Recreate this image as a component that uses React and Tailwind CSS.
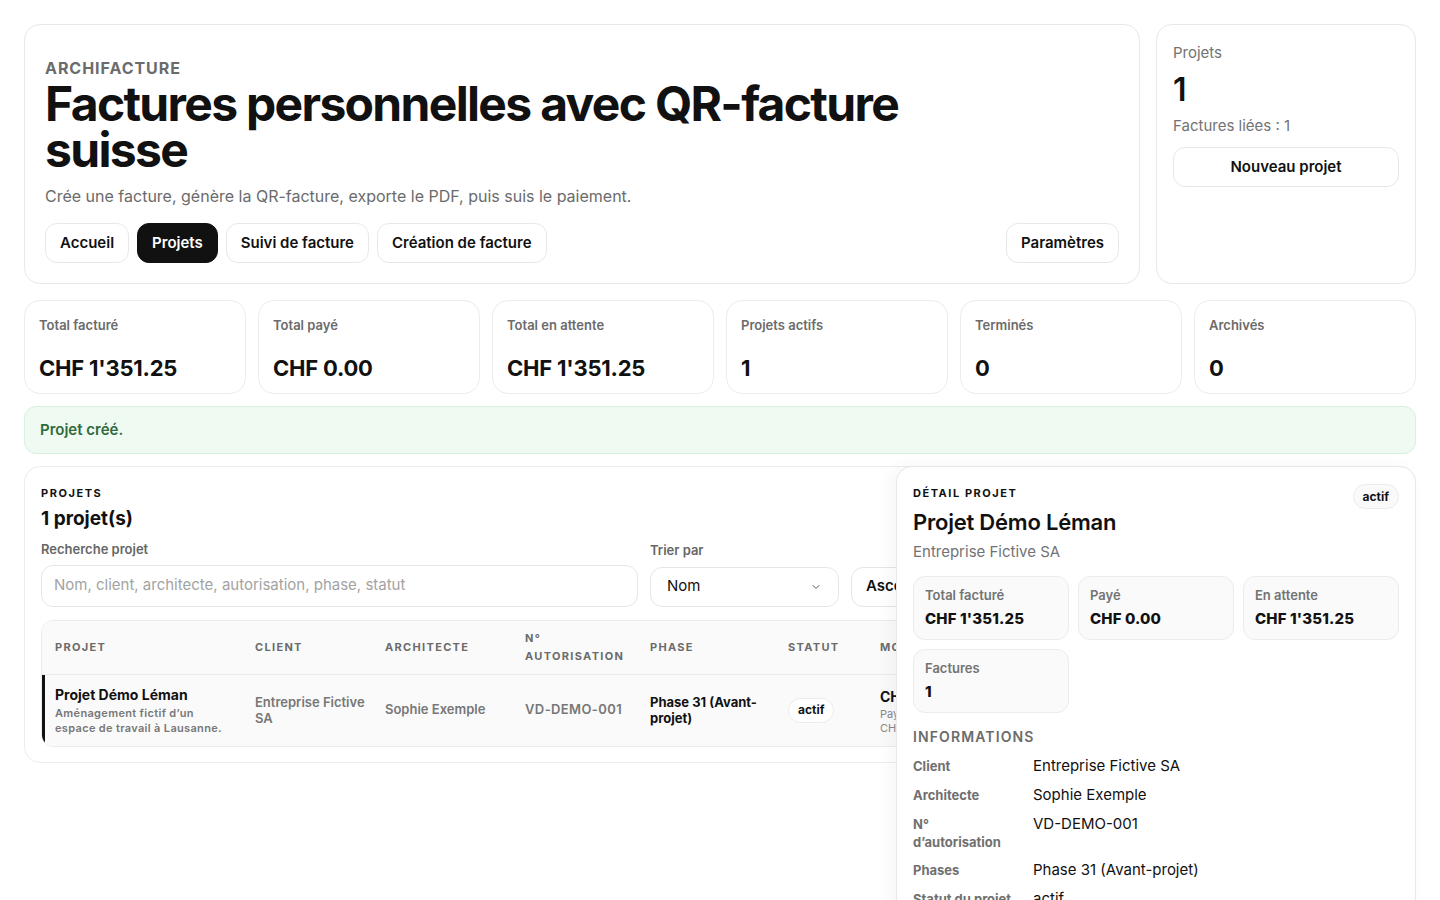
import React from 'react';
import { ChevronDown } from 'lucide-react';

const stats = [
  { label: 'Total facturé', value: "CHF 1'351.25" },
  { label: 'Total payé', value: 'CHF 0.00' },
  { label: 'Total en attente', value: "CHF 1'351.25" },
  { label: 'Projets actifs', value: '1' },
  { label: 'Terminés', value: '0' },
  { label: 'Archivés', value: '0' },
];

const navItems = ['Accueil', 'Projets', 'Suivi de facture', 'Création de facture'];

const infoRows = [
  { label: ['Client'], value: 'Entreprise Fictive SA' },
  { label: ['Architecte'], value: 'Sophie Exemple' },
  { label: ['N°', 'd’autorisation'], value: 'VD-DEMO-001' },
  { label: ['Phases'], value: 'Phase 31 (Avant-projet)' },
  { label: ['Statut du projet'], value: 'actif' },
];

const MiniStat = ({ label, value }) => (
  <div className="h-[64px] rounded-xl border border-[#ececec] bg-[#fafafa] px-[11px] pt-[9px]">
    <div className="text-[13px] font-semibold leading-[18px] text-[#737373]">{label}</div>
    <div className="mt-[4px] text-[15px] font-extrabold leading-[22px] tracking-[0.01em] text-[#111]">{value}</div>
  </div>
);

const App = () => {
  return (
    <div className="h-[900px] overflow-hidden bg-white font-['Inter',sans-serif] text-[#111]">
      <div className="flex flex-col gap-3 p-6">
        {/* Top row */}
        <div className="flex gap-4">
          <div className="flex h-[260px] flex-1 flex-col rounded-2xl border border-[#e8e8e8] px-5 pt-[31px] pb-5">
            <div className="text-[16px] font-bold uppercase tracking-[0.06em] text-[#6b6b6b]">Archifacture</div>
            <h1 className="mt-[1px] max-w-[880px] text-[48px] font-bold leading-[46px] tracking-[-0.035em] text-[#111]">
              Factures personnelles avec QR-facture suisse
            </h1>
            <p className="mt-[11px] text-[16px] text-[#6b6b6b]">
              Crée une facture, génère la QR-facture, exporte le PDF, puis suis le paiement.
            </p>
            <div className="mt-auto flex items-center gap-2">
              {navItems.map((item) => (
                <button
                  key={item}
                  className={`h-10 rounded-xl border px-[14px] text-[15px] font-semibold ${
                    item === 'Projets'
                      ? 'border-[#111] bg-[#111] text-white'
                      : 'border-[#e8e8e8] bg-white text-[#111]'
                  }`}
                >
                  {item}
                </button>
              ))}
              <button className="ml-auto h-10 rounded-xl border border-[#e8e8e8] bg-white px-[14px] text-[15px] font-semibold">
                Paramètres
              </button>
            </div>
          </div>

          <div className="flex h-[260px] w-[260px] flex-col rounded-2xl border border-[#e8e8e8] px-4 pt-[17px]">
            <div className="text-[15px] text-[#737373]">Projets</div>
            <div className="mt-[7px] text-[32px] font-semibold leading-[36px]">1</div>
            <div className="mt-[7px] text-[15px] text-[#737373]">Factures liées : 1</div>
            <button className="mt-[10px] h-10 w-full rounded-xl border border-[#e8e8e8] bg-white text-[15px] font-semibold">
              Nouveau projet
            </button>
          </div>
        </div>

        {/* Stats */}
        <div className="mt-1 grid grid-cols-6 gap-3">
          {stats.map((s) => (
            <div key={s.label} className="h-[94px] rounded-2xl border border-[#ececec] px-[14px] pt-[15px]">
              <div className="text-[13px] font-semibold text-[#6b6b6b]">{s.label}</div>
              <div className="mt-[16px] text-[22px] font-bold tracking-[-0.01em]">{s.value}</div>
            </div>
          ))}
        </div>

        {/* Alert */}
        <div className="flex h-12 items-center rounded-xl border border-[#d8f0de] bg-[#effaf2] px-[15px] text-[15px] font-semibold text-[#2f6b3c]">
          Projet créé.
        </div>

        {/* Projects */}
        <div className="relative">
          <div className="h-[297px] overflow-hidden rounded-2xl border border-[#ececec] px-4 pt-[18px]">
            <div className="text-[11px] font-bold uppercase tracking-[0.14em]">Projets</div>
            <div className="mt-[3px] text-[19px] font-bold">1 projet(s)</div>
            <div className="mt-[7px] flex items-end gap-3">
              <div className="w-[597px]">
                <div className="text-[13px] font-semibold text-[#666]">Recherche projet</div>
                <div className="mt-[5px] flex h-[42px] items-center rounded-xl border border-[#e6e6e6] px-3 text-[15px] text-[#a3a3a3]">
                  Nom, client, architecte, autorisation, phase, statut
                </div>
              </div>
              <div className="w-[189px]">
                <div className="text-[13px] font-semibold text-[#666]">Trier par</div>
                <div className="mt-[6px] flex h-10 items-center justify-between rounded-xl border border-[#e6e6e6] px-4 text-[15px]">
                  <span>Nom</span>
                  <ChevronDown className="h-3 w-3 text-[#555]" strokeWidth={2} />
                </div>
              </div>
              <div className="flex h-10 w-[170px] items-center rounded-xl border border-[#e6e6e6] px-[14px] text-[15px] font-semibold">
                Ascendant
              </div>
            </div>

            <div className="mt-[13px] w-[1100px] overflow-hidden rounded-xl border border-[#ececec]">
              <div className="flex h-[54px] items-center border-b border-[#ececec] bg-[#fafafa] text-[11px] font-bold uppercase tracking-[0.12em] text-[#6b6b6b]">
                <div className="w-[213px] pl-[13px]">Projet</div>
                <div className="w-[130px]">Client</div>
                <div className="w-[140px]">Architecte</div>
                <div className="w-[125px] leading-[18px]">N°<br />Autorisation</div>
                <div className="w-[138px]">Phase</div>
                <div className="w-[92px]">Statut</div>
                <div>Montant</div>
              </div>
              <div className="flex h-[71px] items-center border-l-[3px] border-[#111] bg-[#fafafa] text-[13px]">
                <div className="w-[210px] pl-[10px] pr-[26px]">
                  <div className="text-[14px] font-bold">Projet Démo Léman</div>
                  <div className="mt-[1px] text-[11px] font-semibold leading-[15px] tracking-[0.03em] text-[#777]">
                    Aménagement fictif d’un espace de travail à Lausanne.
                  </div>
                </div>
                <div className="w-[130px] pr-3 font-semibold leading-[16px] text-[#777]">Entreprise Fictive SA</div>
                <div className="w-[140px] font-semibold text-[#777]">Sophie Exemple</div>
                <div className="w-[125px] font-semibold tracking-[0.03em] text-[#777]">VD-DEMO-001</div>
                <div className="w-[138px] pr-3 font-bold leading-[16px]">Phase 31 (Avant-projet)</div>
                <div className="w-[92px]">
                  <span className="inline-flex h-[25px] items-center rounded-full border border-[#ececec] bg-white px-[9px] text-[12px] font-bold">
                    actif
                  </span>
                </div>
                <div>
                  <div className="text-[14px] font-bold">CHF 1'351.25</div>
                  <div className="text-[11px] leading-[14px] text-[#888]">Payé CHF 0.00</div>
                  <div className="text-[11px] leading-[14px] text-[#888]">CHF 1'351.25</div>
                </div>
              </div>
            </div>
          </div>

          {/* Detail drawer */}
          <div className="absolute top-0 right-0 h-[460px] w-[520px] rounded-2xl border border-[#e8e8e8] bg-white px-4 pt-[18px] shadow-[-6px_0_16px_rgba(0,0,0,0.04)]">
            <div className="flex items-start justify-between">
              <div>
                <div className="text-[11px] font-bold uppercase tracking-[0.14em]">Détail projet</div>
                <div className="mt-[4px] text-[22px] font-semibold tracking-[-0.01em]">Projet Démo Léman</div>
                <div className="mt-[2px] text-[15px] text-[#737373]">Entreprise Fictive SA</div>
              </div>
              <span className="mt-[-1px] inline-flex h-[25px] items-center rounded-full border border-[#ececec] bg-[#fafafa] px-[9px] text-[12px] font-bold">
                actif
              </span>
            </div>
            <div className="mt-[13px] grid grid-cols-3 gap-[9px]">
              <MiniStat label="Total facturé" value="CHF 1'351.25" />
              <MiniStat label="Payé" value="CHF 0.00" />
              <MiniStat label="En attente" value="CHF 1'351.25" />
              <MiniStat label="Factures" value="1" />
            </div>
            <div className="mt-[14px] text-[14px] font-semibold uppercase leading-[20px] tracking-[0.08em] text-[#6b6b6b]">Informations</div>
            <div className="mt-[9px] flex flex-col gap-[9px]">
              {infoRows.map((r) => (
                <div key={r.value} className="flex">
                  <div className="w-[120px] pt-[1px] text-[13px] font-bold leading-[18px] text-[#707070]">
                    {r.label.map((l) => (
                      <div key={l}>{l}</div>
                    ))}
                  </div>
                  <div className="text-[15px] leading-[20px] text-[#111]">{r.value}</div>
                </div>
              ))}
            </div>
          </div>
        </div>
      </div>
    </div>
  );
};

export default App;
